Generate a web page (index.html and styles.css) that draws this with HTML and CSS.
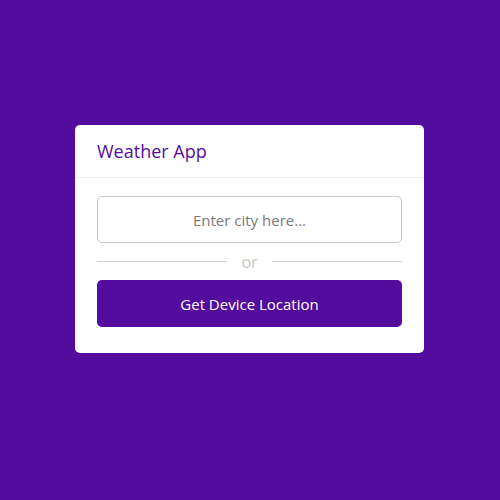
FILE: index.html
```html
<!DOCTYPE html>
<html>
<head>
<meta charset="utf-8">
<link rel="stylesheet" href="styles.css">
</head>
<body>
<div class="page">
  <div class="card">
    <div class="card-header">Weather App</div>
    <div class="card-body">
      <input class="city-input" type="text" placeholder="Enter city here...">
      <div class="divider"><span class="line"></span><span class="or">or</span><span class="line"></span></div>
      <button class="locate-btn">Get Device Location</button>
    </div>
  </div>
</div>
</body>
</html>
```
FILE: styles.css
```css
html, body {
  margin: 0;
  padding: 0;
  height: 100%;
}
body {
  background: #530c9e;
  font-family: "Open Sans", "Noto Sans", sans-serif;
}
.page {
  height: 500px;
  display: flex;
  align-items: center;
  justify-content: center;
}
.card {
  width: 349px;
  background: #fff;
  border-radius: 5px;
  margin-top: -22px;
  margin-left: -1px;
}
.card-header {
  height: 52px;
  display: flex;
  align-items: center;
  padding: 0 22px;
  font-size: 18px;
  font-weight: 500;
  color: #530c9e;
  border-bottom: 1px solid #ececec;
}
.card-body {
  padding: 18px 22px 26px;
  display: flex;
  flex-direction: column;
}
.city-input {
  box-sizing: border-box;
  height: 47px;
  width: 100%;
  border: 1px solid #c8c8c8;
  border-radius: 5px;
  text-align: center;
  font-family: inherit;
  font-size: 15px;
  color: #444;
  outline: none;
}
.city-input::placeholder {
  color: #7a7a7a;
}
.divider {
  height: 37px;
  display: flex;
  align-items: center;
}
.line {
  flex: 1;
  height: 1px;
  background: #d0d0d0;
}
.or {
  padding: 0 14px;
  color: #c6c6c6;
  font-size: 16px;
  line-height: 1;
}
.locate-btn {
  height: 47px;
  width: 100%;
  border: none;
  border-radius: 5px;
  background: #530c9e;
  color: #fff;
  font-family: inherit;
  font-size: 15px;
}
```
